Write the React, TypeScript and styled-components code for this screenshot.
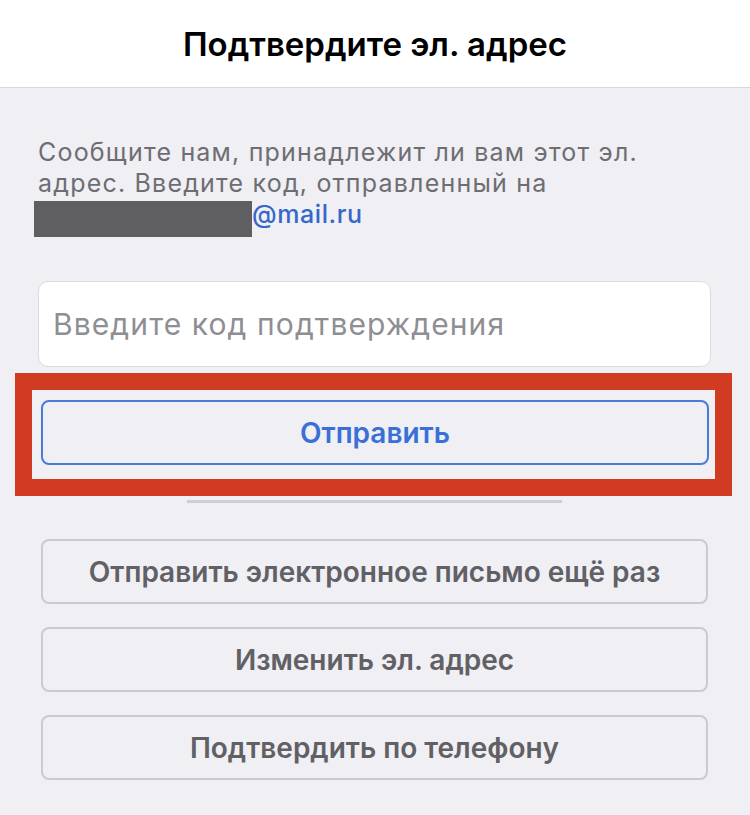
import React from 'react';
import styled, { createGlobalStyle } from 'styled-components';

const GlobalStyle = createGlobalStyle`
  html, body {
    margin: 0;
    padding: 0;
    background: #efeff4;
  }
  body {
    font-family: Inter, "Liberation Sans", sans-serif;
    -webkit-font-smoothing: antialiased;
  }
`;

const Page = styled.div`
  min-height: 815px;
  background: #efeff4;
`;

const Header = styled.header`
  height: 87px;
  background: #ffffff;
  border-bottom: 1px solid #d9d9dc;
  display: flex;
  align-items: center;
  justify-content: center;
`;

const Title = styled.h1`
  margin: 0;
  font-size: 33px;
  font-weight: 600;
  color: #000;
`;

const Content = styled.main`
  padding: 49px 39px 40px 38px;
`;

const Intro = styled.p`
  margin: 0;
  font-size: 25px;
  line-height: 31px;
  letter-spacing: 1.2px;
  color: #6d6d72;
`;

const Redacted = styled.span`
  display: inline-block;
  width: 218px;
  height: 36px;
  margin-left: -4px;
  background: #5f5f61;
  vertical-align: -14px;
`;

const Email = styled.span`
  color: #3567c8;
  font-weight: 500;
  letter-spacing: 0.6px;
`;

const CodeInput = styled.input`
  display: block;
  box-sizing: border-box;
  width: 100%;
  height: 86px;
  margin-top: 44px;
  padding: 0 14px;
  border: 1px solid #dcdce0;
  border-radius: 10px;
  background: #fff;
  font-family: inherit;
  font-size: 30px;
  letter-spacing: 1.1px;
  color: #000;
  outline: none;

  &::placeholder {
    color: #8e8e93;
  }
`;

const Highlight = styled.div`
  margin: 6px -21px 0 -23px;
  border: 17px solid #d13b22;
  padding: 10px 6px 14px 9px;
  background: #efeff4;
`;

const Button = styled.button<{ $primary?: boolean }>`
  display: flex;
  align-items: center;
  justify-content: center;
  box-sizing: border-box;
  width: 100%;
  height: 65px;
  border-radius: 8px;
  border: 2px solid ${p => (p.$primary ? '#4a7bd6' : '#cbcbcf')};
  background: #efeff4;
  color: ${p => (p.$primary ? '#3a6fd8' : '#606065')};
  font-family: inherit;
  font-size: 28px;
  font-weight: 600;
  cursor: pointer;
`;

const Divider = styled.hr`
  width: 375px;
  height: 3px;
  margin: 4px auto 0;
  border: none;
  background: #cfcfd3;
`;

const Actions = styled.div`
  display: flex;
  flex-direction: column;
  gap: 23px;
  margin: 36px 3px 0 3px;
`;

const App: React.FC = () => {
  return (
    <Page>
      <GlobalStyle />
      <Header>
        <Title>Подтвердите эл. адрес</Title>
      </Header>
      <Content>
        <Intro>
          Сообщите нам, принадлежит ли вам этот эл. адрес. Введите код, отправленный на{' '}
          <Redacted />
          <Email>@mail.ru</Email>
        </Intro>
        <CodeInput placeholder="Введите код подтверждения" />
        <Highlight>
          <Button $primary>Отправить</Button>
        </Highlight>
        <Divider />
        <Actions>
          <Button>Отправить электронное письмо ещё раз</Button>
          <Button>Изменить эл. адрес</Button>
          <Button>Подтвердить по телефону</Button>
        </Actions>
      </Content>
    </Page>
  );
};

export default App;
